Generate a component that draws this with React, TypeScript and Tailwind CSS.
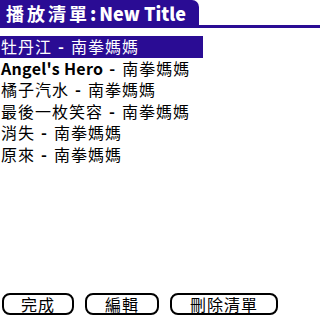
import React from "react";

const songs: [string, string][] = [
  ["牡丹江", "南拳媽媽"],
  ["Angel's Hero", "南拳媽媽"],
  ["橘子汽水", "南拳媽媽"],
  ["最後一枚笑容", "南拳媽媽"],
  ["消失", "南拳媽媽"],
  ["原來", "南拳媽媽"],
];

const font = { fontFamily: '"Noto Sans CJK TC", "Noto Sans", sans-serif' };

const App = (): JSX.Element => {
  return (
    <div className="w-[320px] h-[322px] bg-white flex flex-col overflow-hidden" style={font}>
      {/* title tab */}
      <div className="flex flex-col">
        <div className="w-[199px] h-[25px] bg-[#2a0c94] rounded-tr-[7px] flex items-center pl-[6px] text-white font-bold leading-none whitespace-nowrap">
          <span className="text-[18px] tracking-[3px]">播放清單</span>
          <span className="text-[18px] font-black mr-[3px]">:</span>
          <span className="text-[18px] font-black">New Title</span>
        </div>
        <div className="h-[3px] bg-[#2a0c94]" />
      </div>

      <div className="flex flex-col mt-[8px]">
        {songs.map(([title, artist], i) => (
          <div
            key={title}
            className={`w-[203px] h-[21.5px] flex items-center pl-[1px] text-[16px] whitespace-nowrap tracking-[1px] ${
              i === 0 ? "bg-[#2a0c94] text-white" : "text-black"
            }`}
          >
            <span className={`block leading-[17px] ${/[A-Za-z]/.test(title) ? "font-semibold tracking-[0.3px]" : ""}`}>{title}</span>
            <span className="block leading-[17px] font-bold mx-[6px]">-</span>
            <span className="block leading-[17px]">{artist}</span>
          </div>
        ))}
      </div>

      <div className="mt-auto mb-[7px] flex gap-[11px] pl-[2px]">
        <button className="w-[72px] h-[22px] border-2 border-black rounded-[8px] text-[16px] text-black leading-none flex items-center justify-center tracking-[1px]">
          完成
        </button>
        <button className="w-[74px] h-[22px] border-2 border-black rounded-[8px] text-[16px] text-black leading-none flex items-center justify-center tracking-[1px]">
          編輯
        </button>
        <button className="w-[108px] h-[22px] border-2 border-black rounded-[8px] text-[16px] text-black leading-none flex items-center justify-center tracking-[1px]">
          刪除清單
        </button>
      </div>
    </div>
  );
};

export default App;
